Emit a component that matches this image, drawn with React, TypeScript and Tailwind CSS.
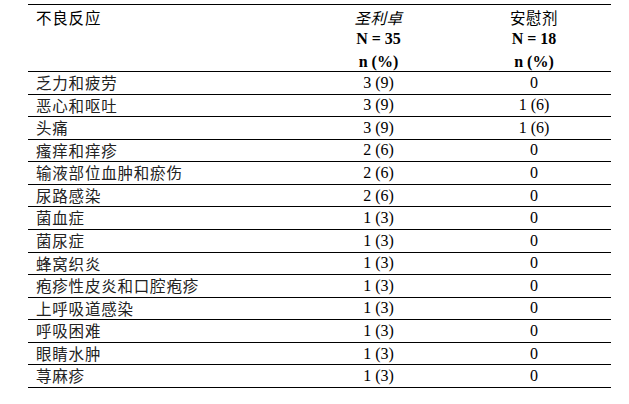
const ROWS: [string, string, string][] = [
  ['乏力和疲劳', '3 (9)', '0'],
  ['恶心和呕吐', '3 (9)', '1 (6)'],
  ['头痛', '3 (9)', '1 (6)'],
  ['瘙痒和痒疹', '2 (6)', '0'],
  ['输液部位血肿和瘀伤', '2 (6)', '0'],
  ['尿路感染', '2 (6)', '0'],
  ['菌血症', '1 (3)', '0'],
  ['菌尿症', '1 (3)', '0'],
  ['蜂窝织炎', '1 (3)', '0'],
  ['疱疹性皮炎和口腔疱疹', '1 (3)', '0'],
  ['上呼吸道感染', '1 (3)', '0'],
  ['呼吸困难', '1 (3)', '0'],
  ['眼睛水肿', '1 (3)', '0'],
  ['荨麻疹', '1 (3)', '0'],
]

const cjk = "font-['Noto_Sans_CJK_SC',sans-serif]"
const serif = "font-['Liberation_Serif','Noto_Sans_CJK_SC',serif]"

export default function App() {
  return (
    <div className="min-h-[404px] w-[629px] bg-white pl-[28px] pt-[4px] text-black">
      <div className="w-[583px]">
        <div className="flex h-[68px] border-y border-black leading-[22.4px]">
          <div className={`w-[272px] pl-[8px] pt-[1px] text-[15.5px] tracking-[0.8px] ${cjk}`}>
            不良反应
          </div>
          <div className="flex w-[157px] flex-col items-center pt-[1px] text-[16px]">
            <span className={`text-[15.5px] italic tracking-[0.5px] ${cjk}`}>圣利卓</span>
            <span className={`font-bold ${serif}`}>N = 35</span>
            <span className={`font-bold ${serif}`}>n (%)</span>
          </div>
          <div className="flex w-[154px] flex-col items-center pt-[1px] text-[16px]">
            <span className={`text-[15.5px] tracking-[0.5px] ${cjk}`}>安慰剂</span>
            <span className={`font-bold ${serif}`}>N = 18</span>
            <span className={`font-bold ${serif}`}>n (%)</span>
          </div>
        </div>
        {ROWS.map(([name, a, b]) => (
          <div
            key={name}
            className="box-border flex h-[22.57px] items-center border-b border-black"
          >
            <div className={`w-[272px] pl-[8px] text-[15.5px] leading-none tracking-[0.8px] text-[#222] ${cjk}`}>
              {name}
            </div>
            <div className={`w-[157px] text-center text-[16px] leading-none ${serif}`}>{a}</div>
            <div className={`w-[154px] text-center text-[16px] leading-none ${serif}`}>{b}</div>
          </div>
        ))}
      </div>
    </div>
  )
}
